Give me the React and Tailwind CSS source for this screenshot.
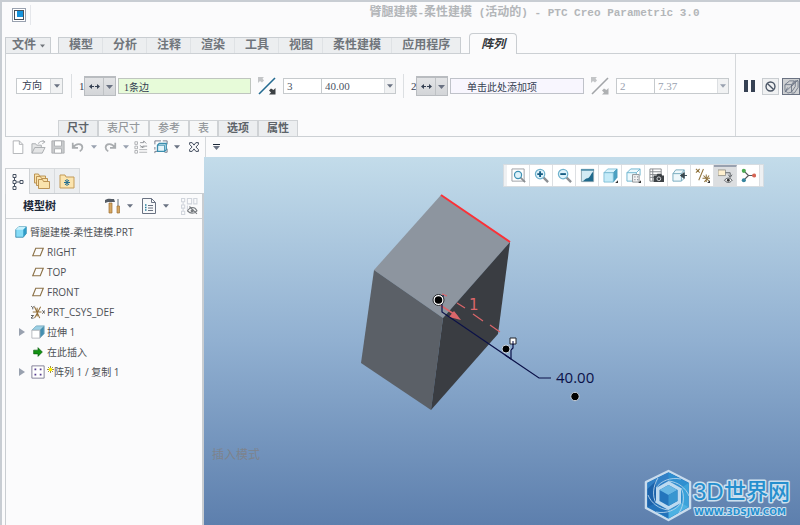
import React from 'react';

const Caret = ({ className = 'text-gray-500' }) => (
  <svg width="7" height="4" viewBox="0 0 7 4" className={`shrink-0 ${className}`} aria-hidden="true">
    <path d="M0 0h7L3.500 4z" fill="currentColor" />
  </svg>
);

const Icon = ({ size = 16, children }) => (
  <svg
    width={size}
    height={size}
    viewBox="0 0 16 16"
    fill="none"
    stroke="currentColor"
    className="block shrink-0"
    aria-hidden="true"
  >
    {children}
  </svg>
);

/* ---------- title bar ---------- */

const TitleBar = () => (
  <header className="flex h-[35px] items-start pt-[2px]">
    <button aria-label="窗口" className="ml-[7px] mt-1 border border-gray-400 bg-white p-px">
      <svg width="10" height="10" viewBox="0 0 10 10" className="block">
        <rect x=".5" y=".5" width="9" height="9" fill="#fff" stroke="#46515b" />
        <rect x="3" y="1" width="6" height="6" fill="#1593dc" />
      </svg>
    </button>
    <span className="ml-1 mt-px h-5 w-px bg-gray-200" />
    <h1 className="mx-auto whitespace-nowrap pl-[238px] font-['Liberation_Mono','Noto_Sans_CJK_SC',monospace] text-[11px] font-bold leading-[18px] text-[#b3b6b9]">
      <span className="text-[12px]">臂腿建模</span>-<span className="text-[12px]">柔性建模</span> (
      <span className="text-[12px]">活动的</span>) - PTC Creo Parametric 3.0
    </h1>
  </header>
);

/* ---------- ribbon ---------- */

const ribbonTabs = ['模型', '分析', '注释', '渲染', '工具', '视图', '柔性建模', '应用程序'];

const RibbonTabs = () => (
  <nav className="flex h-4 items-end text-[12px] font-bold leading-[15px] text-[#70757b]">
    <button className="flex h-4 items-center gap-1 border border-b-0 border-[#c9cdd1] bg-[#eceef0] pl-[6px] pr-[5px]">
      文件
      <Caret className="w-[5px]" />
    </button>
    <div className="ml-[7px] flex h-4 divide-x divide-[#dfe2e5] border border-b-0 border-[#c9cdd1] bg-[#eceef0]">
      {ribbonTabs.map((tab) => (
        <button key={tab} className={tab.length > 2 ? 'px-[10px]' : 'pr-[9px] pl-[10px]'}>
          {tab}
        </button>
      ))}
    </div>
    <button
      aria-current="page"
      className="relative z-10 -mb-px ml-2 h-[21px] rounded-t-sm border border-b-0 border-[#c9cdd1] bg-[#fbfbfc] px-[11px] italic text-[#33373b]"
    >
      阵列
    </button>
  </nav>
);

const Divider = () => <span className="h-6 w-px shrink-0 bg-[#dcdfe2]" />;

const SplitButton = ({ label }) => (
  <div className="flex h-5 w-8 shrink-0 border border-t-2 border-[#b9bcc0] bg-linear-to-b from-[#e3e4e6] to-[#d3d5d8]">
    <button aria-label={label} className="flex flex-1 items-center justify-center">
      <svg width="11" height="7" viewBox="0 0 11 7" className="text-gray-700">
        <path d="M0 3.500 3 1v5zM11 3.500 8 1v5zM3 3h2v1H3zM6 3h2v1H6z" fill="currentColor" />
      </svg>
    </button>
    <button aria-label={`${label}选项`} className="flex w-3 items-center justify-center border-l border-[#bfc2c5]">
      <Caret />
    </button>
  </div>
);

const FlipButton = ({ label, disabled }) => (
  <button aria-label={label} disabled={disabled} className="shrink-0">
    <svg width="18" height="18" viewBox="0 0 18 18" className="block">
      <path d="M1 17 17 1" stroke={disabled ? '#a2a5a8' : '#246b91'} strokeWidth="1.600" />
      <path d="M0 0h6L4.500 1.500 6 3.500 4 5.500 2 4 0 6z" fill="#c3c5c7" />
      <path d="M17.500 11v6.500H11l2-2-2-2 2-2 2.500 1.500z" fill={disabled ? '#aeb0b2' : '#3c4044'} />
    </svg>
  </button>
);

const ValueBox = ({ count, value, name, disabled }) => (
  <div
    className={`flex h-4 shrink-0 font-['Liberation_Serif',serif] text-[11px] ${
      disabled ? 'text-gray-400' : 'text-gray-600'
    }`}
  >
    <input
      aria-label={`${name}成员数`}
      defaultValue={count}
      disabled={disabled}
      className="w-[39px] border border-[#c6cacd] bg-white px-[3px]"
    />
    <div className="flex w-[74px] border border-l-0 border-[#c6cacd] bg-white">
      <input
        aria-label={`${name}间距`}
        defaultValue={value}
        disabled={disabled}
        className="min-w-0 flex-1 px-[3px]"
      />
      <button
        aria-label={`${name}间距列表`}
        disabled={disabled}
        className="flex w-[11px] items-center justify-center border-l border-[#dcdfe2] bg-[#f1f2f3]"
      >
        <Caret className={disabled ? 'w-[6px] text-gray-400' : 'w-[6px] text-gray-500'} />
      </button>
    </div>
  </div>
);

const DirectionRow = () => (
  <div className="flex h-[64px] items-center pl-[10px] font-['Liberation_Serif','Noto_Sans_CJK_SC',sans-serif] text-[11px] text-gray-700">
    <div className="grid h-4 w-[47px] shrink-0 items-stretch border border-[#c6cacd] bg-white">
      <select
        aria-label="阵列类型"
        className="col-start-1 row-start-1 appearance-none pl-[5px] text-[10px] leading-[14px]"
      >
        <option>方向</option>
      </select>
      <span className="pointer-events-none col-start-1 row-start-1 flex w-3 items-center justify-center justify-self-end border-l border-[#d3d6d9] bg-[#f1f2f3]">
        <Caret className="w-[6px] text-gray-500" />
      </span>
    </div>
    <span className="ml-2 flex">
      <Divider />
    </span>
    <label htmlFor="dir1" className="ml-[7px] w-[5px]">1</label>
    <SplitButton label="第一方向" />
    <input
      id="dir1"
      defaultValue="1条边"
      className="ml-[2px] h-4 w-[133px] min-w-0 border border-[#bfc5bf] bg-[#e7fbd9] px-[5px] text-[10px]"
    />
    <span className="ml-[7px] flex items-center gap-[7px]">
      <FlipButton label="反向第一方向" />
      <ValueBox name="第一方向" count="3" value="40.00" />
      <Divider />
    </span>
    <label htmlFor="dir2" className="ml-[7px] w-[5px]">2</label>
    <SplitButton label="第二方向" />
    <input
      id="dir2"
      defaultValue="单击此处添加项"
      className="ml-[2px] h-4 w-[134px] min-w-0 border border-[#bfc2c9] bg-[#f8f6fe] pl-4 text-[10px]"
    />
    <span className="ml-[7px] flex items-center gap-[7px]">
      <FlipButton label="反向第二方向" disabled />
      <ValueBox name="第二方向" count="2" value="7.37" disabled />
    </span>
  </div>
);

const dashboardTabs = [
  { name: '尺寸', enabled: true },
  { name: '表尺寸', enabled: false },
  { name: '参考', enabled: false },
  { name: '表', enabled: false },
  { name: '选项', enabled: true },
  { name: '属性', enabled: true },
];

const DashboardTabs = () => (
  <div className="ml-[52px] flex h-4 text-[11px] leading-[15px]">
    {dashboardTabs.map(({ name, enabled }) => (
      <button
        key={name}
        disabled={!enabled}
        className={`border border-b-0 border-[#cfd2d5] px-2 ${
          enabled ? 'bg-[#eceef0] font-bold text-[#5d6369]' : 'bg-[#f6f7f8] font-medium text-[#94989c]'
        }`}
      >
        {name}
      </button>
    ))}
  </div>
);

const Ribbon = () => (
  <section className="flex h-[84px] border-y border-l border-[#ccd0d4] bg-[#fbfbfc]">
    <div className="flex min-w-0 flex-1 flex-col justify-between">
      <DirectionRow />
      <DashboardTabs />
    </div>
    <div className="flex h-full shrink-0 border-l border-[#d5d8db] pl-2">
      <div className="flex h-[64px] items-center">
        <button aria-label="暂停" className="mr-[7px] flex gap-[3px]">
          <span className="h-3 w-1 bg-gray-700" />
          <span className="h-3 w-1 bg-gray-700" />
        </button>
        <button aria-label="无预览" className="flex size-[17px] items-center justify-center border border-[#c9cdd1] bg-[#f0f1f2] text-gray-600">
          <Icon size={11}>
            <circle cx="8" cy="8" r="6.500" strokeWidth="2" />
            <path d="m3.500 3.500 9 9" strokeWidth="2" />
          </Icon>
        </button>
        <button aria-label="预览" className="ml-[3px] flex h-[17px] w-[18px] items-center justify-center border border-gray-500 bg-[#cfd1d3] text-gray-500">
          <Icon size={15}>
            <path d="M1 6 6 2h5L8 6v8l-4 1-3-3zM1 6h7M8 8l4-6h3v7l-4 6H8M12 2v6l-4 6M1 14 15 1M4 9l-3 5" strokeWidth=".9" />
          </Icon>
        </button>
      </div>
    </div>
  </section>
);

/* ---------- quick access ---------- */

const QuickAccess = () => (
  <div className="flex h-5 items-center pl-[6px] text-[#a9acaf]">
    <button aria-label="新建" className="w-5">
      <Icon size={14}>
        <path d="M2.500 1h7l4 4v10.500h-11zM9.500 1v4h4" fill="#fff" />
      </Icon>
    </button>
    <button aria-label="打开" className="w-5">
      <Icon size={15}>
        <path d="M1 14V4h4l1 1.500h5V8M1 14l3-6h11l-3 6z" fill="#e4e5e6" />
        <path d="M8 4c1-3 4-3 6-2M12 0l3 2-3 2" />
      </Icon>
    </button>
    <button aria-label="保存" className="w-5">
      <Icon size={14}>
        <path d="M1 1h14v14H1z" fill="#c9cbcd" />
        <path d="M4 1h8v6H4zM4 10h8v5H4z" fill="#fff" />
      </Icon>
    </button>
    <button aria-label="撤消" className="flex w-8 items-center gap-[6px]">
      <Icon size={14}>
        <path d="M2 3v6h6M2.500 8.500C6 3 13 4 13 8.500c0 2-1.500 3.500-3 4.500" strokeWidth="2" />
      </Icon>
      <Caret className="w-[6px] text-gray-400" />
    </button>
    <button aria-label="重做" className="flex w-[31px] items-center gap-[6px]">
      <Icon size={14}>
        <path d="M14 3v6H8M13.500 8.500C10 3 3 4 3 8.500c0 2 1.500 3.500 3 4.500" strokeWidth="2" />
      </Icon>
      <Caret className="w-[6px] text-gray-400" />
    </button>
    <button aria-label="重新生成" className="w-5">
      <Icon size={14}>
        <path d="M1 2h3v3H1zM1 7h3v3H1zM1 12h3v3H1zM6 11h9M6 14h9M7 8h5" />
        <path d="M7 3h4V1l3 3M15 7h-5v2L7 6" stroke="#888c90" />
      </Icon>
    </button>
    <button aria-label="窗口" className="flex w-[35px] items-center gap-[6px] text-gray-500">
      <Icon size={14}>
        <path d="M1 5V1h7M10 1h5v4M1 8v3M1 15v-2h3M12 14h3v-4" />
        <path d="M4 6l2-2h8v7l-2 2H4z" fill="#e5f4fa" stroke="#3b8eae" strokeWidth="1.500" />
        <path d="M4 6h8v7" stroke="#3b8eae" />
      </Icon>
      <Caret className="w-[6px]" />
    </button>
    <button aria-label="关闭" className="text-gray-700">
      <Icon size={10}>
        <path d="M1 1h4l3 4 3-4h4v3l-4 4 4 4v3h-4l-3-4-3 4H1v-3l4-4-4-4z" strokeWidth="1.500" />
      </Icon>
    </button>
    <span className="ml-[6px] h-full w-px bg-[#d5d8db]" />
    <button aria-label="自定义" className="ml-[7px] flex flex-col items-center text-gray-800">
      <span className="mb-px h-px w-[7px] bg-current" />
      <Caret />
    </button>
  </div>
);

/* ---------- model tree ---------- */

const PlaneIcon = () => (
  <Icon size={12}>
    <path d="M5 3h10l-4 10H1z" stroke="#8c7248" strokeWidth="1.500" />
  </Icon>
);

const CsysIcon = () => (
  <Icon size={14}>
    <path d="M2 8h10M4 2l6 13M11 2 4 15M7 3v10" stroke="#94703a" strokeWidth="1.200" />
    <path d="M0 1l2 2 2-2M2 3v2M13 6l3 4M16 6l-3 4M0 12h3l-3 3h3" stroke="#4b4b4b" />
  </Icon>
);

const PartIcon = () => (
  <Icon size={12}>
    <path d="M1 5l4-4h10v9l-4 5H1z" fill="#86dcf7" stroke="#2a7ea2" strokeLinejoin="round" />
    <path d="M1 5l4-4h10l-4 4z" fill="#c8f1fc" stroke="none" />
    <path d="M11 5l4-4v9l-4 5z" fill="#2f9cc7" stroke="none" />
  </Icon>
);

const ExtrudeIcon = () => (
  <Icon size={14}>
    <path d="M1 6l5-5h9l-5 5z" fill="#9bd0e5" stroke="#78abc0" />
    <path d="M10 6l5-5v9l-5 5z" fill="#438fb1" stroke="#78abc0" />
    <path d="M1 6h9v9H1z" fill="#fff" stroke="#b1b4b8" />
  </Icon>
);

const InsertIcon = () => (
  <Icon size={10}>
    <path d="M1 5h7V1l7 7-7 7v-4H1z" fill="#129212" stroke="#075b0b" />
  </Icon>
);

const PatternIcon = () => (
  <Icon size={14}>
    <path d="M1 1h14v14H1z" fill="#fff" stroke="#77758e" />
    <path d="M4 4h2v2H4zM10 4h2v2h-2zM4 10h2v2H4zM10 10h2v2h-2z" fill="#583f91" stroke="none" />
  </Icon>
);

const treeItems = [
  { name: 'RIGHT', icon: <PlaneIcon /> },
  { name: 'TOP', icon: <PlaneIcon /> },
  { name: 'FRONT', icon: <PlaneIcon /> },
  { name: 'PRT_CSYS_DEF', icon: <CsysIcon /> },
  { name: '拉伸 1', icon: <ExtrudeIcon />, expandable: true },
  { name: '在此插入', icon: <InsertIcon /> },
  { name: '阵列 1 / 复制 1', icon: <PatternIcon />, expandable: true, isNew: true },
];

const ModelTree = () => (
  <ul className="pt-[3px] font-['Open_Sans','Noto_Sans_CJK_SC',sans-serif] text-[10px] text-[#4d5054]">
    <li className="flex h-5 items-center gap-[3px] whitespace-nowrap pl-[9px]">
      <PartIcon />
      臂腿建模-柔性建模.PRT
    </li>
    {treeItems.map(({ name, icon, expandable, isNew }) => (
      <li key={name} className="flex h-5 items-center whitespace-nowrap pl-[13px]">
        <span className="w-3">
          {expandable && (
            <button aria-label={`展开 ${name}`} className="block">
              <svg width="6" height="8" viewBox="0 0 6 8" className="block text-gray-400">
                <path d="M0 0l6 4-6 4z" fill="currentColor" />
              </svg>
            </button>
          )}
        </span>
        <span className="mr-[2px] flex w-[14px] justify-center">{icon}</span>
        {isNew && (
          <svg width="7" height="12" viewBox="0 0 7 12" className="block">
            <path d="M3.500 0v7M0 3.500h7M1 1l5 5M6 1 1 6" stroke="#8d7c13" strokeWidth=".8" />
            <rect x="2" y="2" width="3" height="3" fill="#fff000" />
          </svg>
        )}
        {name}
      </li>
    ))}
  </ul>
);

const FolderShape = ({ x, y }) => (
  <path
    d="M0 1h4l1 2h6v7H0z"
    transform={`translate(${x} ${y})`}
    fill="#fae3ac"
    stroke="#b58a48"
    strokeWidth=".9"
  />
);

const Sidebar = () => (
  <aside className="flex w-[199px] shrink-0 flex-col pt-[11px]">
    <div className="flex h-[25px]">
      <button aria-label="模型树" className="relative z-10 -mb-px flex w-[25px] items-center justify-center border border-b-0 border-[#cfd2d5] bg-[#fbfbfc] text-gray-600">
        <Icon size={16}>
          <path d="M3 .5h3v3H3zM3 6.500h3v3H3zM3 12.500h3v3H3zM10 6.500h3v3h-3zM4.500 3.500v3M4.500 9.500v3M6 8h4" />
        </Icon>
      </button>
      <button aria-label="文件夹浏览器" className="flex w-[25px] items-center justify-center border-t border-r border-[#d8dbde] bg-[#eceef0]">
        <Icon>
          <FolderShape x={0.5} y={0} />
          <FolderShape x={2.5} y={2.5} />
          <FolderShape x={4.5} y={5.5} />
        </Icon>
      </button>
      <button aria-label="收藏夹" className="flex w-[25px] items-center justify-center border-t border-r border-[#d8dbde] bg-[#eceef0]">
        <Icon>
          <path d="M1 2h5l1 2h8v11H1z" fill="#fbe4ae" stroke="#c39b58" />
          <path d="M8 6v7M5 9.500h6M6 7l4 5M10 7l-4 5" stroke="#246f91" />
        </Icon>
      </button>
    </div>
    <div className="flex flex-1 flex-col border-t border-r-2 border-l border-[#c9cdd1]">
      <div className="flex h-[25px] shrink-0 items-center border-b border-[#cfd2d5] pr-1 pl-[17px]">
        <h2 className="flex-1 text-[11px] font-bold text-gray-800">模型树</h2>
        <button aria-label="设置" className="mr-2 flex items-center gap-[6px] text-gray-500">
          <Icon>
            <path d="M4 5h3v10H4z" fill="#d6a762" stroke="#9d7135" strokeWidth=".7" />
            <path d="M0 2c3-2 6-1 9-1l1 3H3L0 5z" fill="#555c65" stroke="none" />
            <path d="M13 1v7" stroke="#65717b" />
            <path d="M12 8h2.500v7H12z" fill="#d6a762" stroke="#9d7135" strokeWidth=".7" />
          </Icon>
          <Caret className="w-[6px]" />
        </button>
        <button aria-label="显示" className="mr-3 flex items-center gap-[6px] text-gray-500">
          <Icon>
            <path d="M1.500.5h9l4 4v11h-13z" fill="#f8f9fa" />
            <path d="M10.500.5v4h4M7 7.500h5M7 10h5M7 12.500h5" />
            <path d="M4 7h1.500M4 9.500h1.500M4 12h1.500" stroke="#287f9f" strokeWidth="1.500" />
          </Icon>
          <Caret className="w-[6px]" />
        </button>
        <button aria-label="隐藏" className="text-gray-300">
          <Icon size={17}>
            <path d="M.5.500h3v3h-3zM.5 6.500h3v3h-3zM.5 12.500h3v3h-3zM6 .5h4v5H6zM12 .5h3v5h-3zM2 3.500v3M2 9.500v3M6 7v5" />
            <path d="M6 12c3-4 7-4 9 0-3 3-6 3-9 0M8 8l7 7" stroke="#777b7f" />
            <circle cx="10.500" cy="12" r="1.500" fill="#777b7f" stroke="none" />
          </Icon>
        </button>
      </div>
      <ModelTree />
    </div>
  </aside>
);

/* ---------- graphics area ---------- */

const Magnifier = ({ sign }) => (
  <>
    <path d="m10 10 5 5" stroke="#8b8f93" strokeWidth="2.500" />
    <circle cx="6.500" cy="6.500" r="5" fill="#dff2fa" stroke="#6fb2cd" strokeWidth="1.300" />
    {sign && <path d={sign} stroke="#165d83" strokeWidth="2" />}
  </>
);

const Box = () => (
  <>
    <path d="M1 5l4-4h10l-4 4z" fill="#d8f3fc" stroke="#6db4cf" strokeWidth=".8" />
    <path d="M11 5l4-4v9l-4 5z" fill="#4ca1c2" stroke="#4b9fbe" strokeWidth=".8" />
    <path d="M1 5h10v10H1z" fill="#c4ebf8" stroke="#6db4cf" strokeWidth=".8" />
  </>
);

const More = () => <path d="M16 13v3h-3z" fill="#333" stroke="none" />;

const viewTools = [
  {
    name: '重新调整',
    icon: (
      <>
        <path d="M1 1h13v13H1z" stroke="#9b9fa3" />
        <path d="m10 10 5 5" stroke="#8b8f93" strokeWidth="2" />
        <circle cx="7.500" cy="7.500" r="3.800" fill="#dff2fa" stroke="#3e91b4" strokeWidth="1.300" />
      </>
    ),
  },
  { name: '放大', icon: <Magnifier sign="M3.500 6.500h6M6.500 3.500v6" /> },
  { name: '缩小', icon: <Magnifier sign="M3.500 6.500h6" /> },
  {
    name: '重画',
    icon: (
      <>
        <path d="M1.500 1.500h13v13h-13z" fill="#d3ebf4" stroke="#8da3ae" />
        <path d="M1 1h14v2H1z" fill="#5793ad" stroke="none" />
        <path d="M14 4v10H3c2-1 3-3 5-3 3-1 3-4 6-7z" fill="#1f6a8c" stroke="none" />
      </>
    ),
  },
  { name: '显示样式', icon: <><Box /><More /></> },
  {
    name: '已保存方向',
    icon: (
      <>
        <path d="M1 5l4-4h10l-4 4v9H1z" fill="#edf9fd" stroke="#6db4cf" />
        <path d="M1 5h10M15 1v7" stroke="#6db4cf" />
        <path d="M7 7h7v8H7z" fill="#f4f4f4" stroke="#8d9195" />
        <path d="M9 9.500h1M9 12.500h1M12 9.500h1M12 12.500h1" />
        <More />
      </>
    ),
  },
  {
    name: '视图管理器',
    icon: (
      <>
        <path d="M1 1h12v13H1zM1 4h12M1 7h12M1 10h12M4 1v13" stroke="#85898d" />
        <path d="M5 8h3l1-2h4l1 2h2v7H5z" fill="#3c4145" stroke="none" />
        <circle cx="10.500" cy="11.500" r="2" stroke="#d6d9dc" />
      </>
    ),
  },
  {
    name: '透视图',
    icon: (
      <>
        <path d="M1 6l3-4h9l-3 4v8H1z" fill="#eef8fb" stroke="#75aabd" />
        <path d="M1 6h9M13 2v9l-3 3" stroke="#75aabd" />
        <path d="M16 8h-5M13 5 9 8l4 3z" fill="#38464e" stroke="#38464e" />
      </>
    ),
  },
  {
    name: '基准显示',
    icon: (
      <>
        <path d="M1 1l4 4M5 1 1 5M9 1 4 13M9 8l6 6M15 8l-5 7M8 11h8M12 7v8" stroke="#91743e" strokeWidth="1.100" />
        <More />
      </>
    ),
  },
  {
    name: '注释显示',
    active: true,
    icon: (
      <>
        <path d="M0 1h8v6H0z" fill="#fff0cf" stroke="#9b9990" />
        <path d="M8 4h5v4M11 6l2 3 2-3" stroke="#5c6064" />
        <path d="M7 12c2-3 6-3 8 0-2 3-6 3-8 0z" fill="#fff" stroke="#484c50" />
        <circle cx="11" cy="12" r="1.500" fill="#333" stroke="none" />
      </>
    ),
  },
  {
    name: '旋转中心',
    icon: (
      <>
        <path d="M3 3l5 5-5 5M8 8h6" stroke="#55585b" strokeWidth="1.300" />
        <circle cx="3" cy="3" r="2.200" fill="#4caa52" stroke="none" />
        <circle cx="3" cy="13" r="2.200" fill="#35849e" stroke="none" />
        <circle cx="14" cy="8" r="2.200" fill="#d66555" stroke="none" />
      </>
    ),
  },
];

const ViewToolbar = () => (
  <div className="absolute top-[7px] right-9 flex h-[23px] border border-[#d6dce1] bg-[#eef0f2] px-[3px]">
    {viewTools.map(({ name, icon, active }) => (
      <button
        key={name}
        aria-label={name}
        className={`flex w-[23px] items-center justify-center border-r border-[#dde0e3] text-gray-600 ${
          active ? 'border-t-2 border-t-gray-400 bg-[#dcdee0]' : 'bg-white'
        }`}
      >
        <Icon size={15}>{icon}</Icon>
      </button>
    ))}
  </div>
);

const Model = () => (
  <svg
    width="260"
    height="230"
    viewBox="350 187 260 230"
    className="absolute top-[30px] left-[146px]"
    role="img"
    aria-label="阵列模型"
  >
    <path d="M441 195 510 242 443 318 374 270z" fill="#8d959f" />
    <path d="M374 270 443 318 431 410 361 363z" fill="#5b6067" />
    <path d="M510 242 498 334 431 410 443 318z" fill="#3a3d42" />
    <path d="M441 195 510 242" stroke="#fb3137" strokeWidth="2" />

    <g stroke="#db666a" fill="none">
      <path d="M442 294l5 2M457 303l8 5M473 314l10 7M490 325l10 7" strokeWidth="1.200" />
      <path d="M440 305l17 11" strokeWidth="1.500" />
      <path d="M461 320l-12-3 5-6z" fill="#db666a" stroke="none" />
    </g>
    <text x="469" y="310" fill="#db666a" className="font-['DejaVu_Sans',sans-serif] text-[15px]">
      1
    </text>

    <g stroke="#0b1148" fill="none">
      <path d="M443 295v5l-1 2v10L539 378h12" strokeWidth="1.200" />
      <path d="M513 342v6l-2 2v9l-6-4" strokeWidth="1.200" />
    </g>
    <circle cx="438.500" cy="300" r="5.500" fill="#fff" stroke="#25282d" />
    <circle cx="438.500" cy="300" r="3.800" fill="#000" />
    <circle cx="506" cy="349" r="4" fill="#000" stroke="#cbd4df" />
    <path d="M510 338h6v6h-6z" fill="#fff" stroke="#22252b" />
    <path d="M513 341v4" stroke="#0b1148" />
    <circle cx="575" cy="396.500" r="4.200" fill="#000" stroke="#cbd4df" />
    <text x="556" y="383" fill="#0b1148" className="font-['Open_Sans',sans-serif] text-[15px]">
      40.00
    </text>
  </svg>
);

const Watermark = () => (
  <svg width="154" height="54" viewBox="0 0 154 54" className="absolute right-[2px] bottom-[2px]" role="img" aria-label="3D世界网">
    <path d="M24.500 2 46 13v26L24.500 51 2 39V13z" fill="#2b7dc4" stroke="#c9dced" strokeWidth="2.500" strokeLinejoin="round" />
    <path d="M24.500 3.500 3.500 14v14C8 20 16 14 24.500 12L37 9.500z" fill="#3180c6" />
    <path d="M24.500 3.500 44.500 14v14C42 19 38 16 37 19L24.500 12z" fill="#2f8fd0" />
    <path d="M44.500 14v24L36 42c2-4 2-14 1-23z" fill="#3ba2da" />
    <path d="M44.500 38 24.500 49.500 12 43c8 1 18-3 25-9z" fill="#4db1e2" />
    <path d="M24.500 49.500 3.500 38V26L12 34l12.500 7z" fill="#2272ba" />
    <path d="M3.500 38V20L12 12v22z" fill="#1c62aa" />
    <g fill="none" stroke="#b4d4ec" strokeWidth=".9">
      <path d="M12 34C8 27 9 17 14 9" />
      <path d="M12 19c5-7 14-11 25-9" />
      <path d="M24.500 12C34 13 42 19 45 27" />
      <path d="M37 19c4 7 3 17-2 25" />
      <path d="M37 34c-5 7-14 11-25 9" />
      <path d="M24.500 41C15 40 7 34 4 26" />
    </g>
    <path d="M24.500 12 37 19v15l-12.500 7L12 34V19z" fill="#bddaf0" />
    <path d="M24.500 16 33.500 21v11l-9 5-9-5V21z" fill="#2475bc" />
    <path d="M15.500 21l9-5 9 5-9 5z" fill="#68b7e4" />
    <path d="M24.500 26l9-5v11l-9 5z" fill="#3896d0" />
    <g fill="#258fce" stroke="#cce0ef" strokeLinejoin="round" className="[paint-order:stroke]">
      <text x="49" y="31" strokeWidth="3" className="font-['Liberation_Sans','Noto_Sans_CJK_SC',sans-serif] text-[24px]">
        3D
      </text>
      <text x="80" y="30" strokeWidth="3" className="font-['Noto_Sans_CJK_SC',sans-serif] text-[22px] font-medium">
        世界网
      </text>
      <text x="50" y="46" strokeWidth="2" className="font-['DejaVu_Sans',sans-serif] text-[9px] font-bold">
        WWW.3DSJW.COM
      </text>
    </g>
  </svg>
);

const GraphicsArea = () => (
  <main className="relative min-w-0 flex-1 overflow-hidden bg-linear-to-b from-[#c3dcea] via-[#91b0d1] to-[#5d7fad]">
    <ViewToolbar />
    <Model />
    <p className="absolute bottom-[62px] left-2 text-[12px] leading-4 text-[#7d838d]">插入模式</p>
    <Watermark />
  </main>
);

const App = () => (
  <div className="flex min-h-screen flex-col border-t-2 border-l-2 border-[#c8cdd3] bg-[#fbfbfc] pl-[3px] font-['Liberation_Sans','Noto_Sans_CJK_SC',sans-serif]">
    <TitleBar />
    <RibbonTabs />
    <Ribbon />
    <QuickAccess />
    <div className="flex flex-1">
      <Sidebar />
      <GraphicsArea />
    </div>
  </div>
);

export default App;
